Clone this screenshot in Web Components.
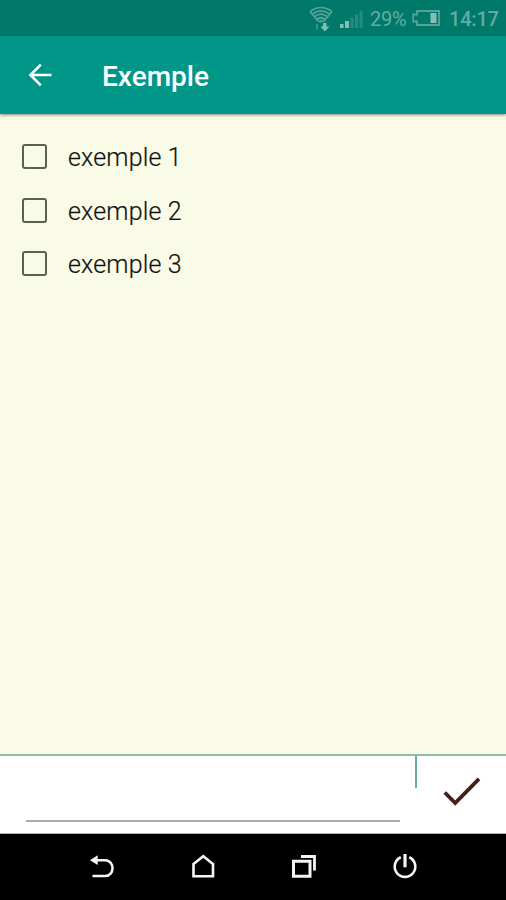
<!DOCTYPE html>
<html lang="fr">
<head>
<meta charset="utf-8">
<title>Exemple</title>
<style>
html,body{margin:0;height:100%;overflow:hidden}
body{font-family:Roboto,"Liberation Sans",sans-serif}
</style>
</head>
<body>
<checklist-app></checklist-app>
<script>
function define(name, html) {
  const template = document.createElement('template');
  template.innerHTML = html;
  customElements.define(name, class extends HTMLElement {
    constructor() {
      super();
      this.attachShadow({ mode: 'open' }).appendChild(template.content.cloneNode(true));
    }
  });
}

define('status-bar', `
<style>
:host{display:flex;align-items:center;justify-content:flex-end;height:36px;box-sizing:border-box;padding:2px 7px 0 0;background:#00796b;color:#64aca3;font-size:20px;line-height:34px}
svg{display:block;flex:none}
.wifi{margin-right:7px}.signal{margin-right:7px}.battery{margin:0 9px 2px 5px}
.pct{width:37px;white-space:nowrap;letter-spacing:-.25px}
.time{width:50px;white-space:nowrap;font-weight:500;letter-spacing:-.2px}
</style>
<svg class="wifi" width="24" height="26" viewBox="0 0 24 26" fill="none" stroke="#58a399" stroke-width="1.7">
<path d="M1 5.500Q12-2.500 23 5.500M3 8.200Q12 1.500 21 8.200M5.500 10.900Q12 5.500 18.500 10.900M8 13.500Q12 10 16 13.500M1 5.500L9.500 15.500M23 5.500L14.500 15.500"/>
<path d="M9 15.500Q12 12.500 15 15.500L12 16.500Z" fill="#58a399" stroke="none"/>
<path d="M14 17h3.500v3.500h3L15.800 25.500 11.500 20.500H14Z" fill="#7fbdb5" stroke="none"/>
<path d="M8 18v5.500" stroke="#31948a" stroke-width="2"/>
</svg>
<svg class="signal" width="23" height="19" viewBox="0 0 23 19">
<path d="M0 14h3.500v4H0ZM5 11h4v7H5Z" fill="#83bfb7"/>
<path d="M10.500 7.500h3v10.500h-3ZM15 4.500h3v13.500h-3ZM19.500 1h3v17h-3Z" fill="#268c80"/>
</svg>
<span class="pct">29%</span>
<svg class="battery" width="28" height="18" viewBox="0 0 28 18">
<path d="M5 2H27V16H5V12.500H1.200V5.500H5Z" fill="none" stroke="#58a399" stroke-width="1.8"/>
<path d="M18.500 4h6v10h-6Z" fill="#83bfb7"/>
</svg>
<span class="time">14:17</span>`);

define('app-toolbar', `
<style>
:host{display:flex;align-items:center;height:78px;box-sizing:border-box;padding:3px 0 0 28px;background:#009688;color:#fff;box-shadow:0 1px 3px rgba(0,0,0,.48);position:relative;font-size:28px;font-weight:500;line-height:40px}
svg{display:block;margin:0 50px 3px 0}
</style>
<svg width="24" height="24" viewBox="0 0 24 24" fill="none" stroke="#fff" stroke-width="2.6"><path d="M23.500 12H2.500M12.800 1.700 2.500 12 12.800 22.300"/></svg>
<slot></slot>`);

define('check-item', `
<style>
:host{display:flex;align-items:center;height:53.500px;font-size:25px;font-weight:300;color:#11120f;line-height:30px;letter-spacing:.17px}
i{box-sizing:border-box;width:25px;height:25px;border:2px solid #5d5e54;border-radius:3px;margin:-2.500px 21.500px 0 0;flex:none}
span{white-space:nowrap;padding-top:1px;-webkit-text-stroke:.2px #11120f}
</style>
<i></i><span><slot></slot></span>`);

define('entry-bar', `
<style>
:host{display:flex;height:80px;box-sizing:border-box;border-top:2px solid #8ebbb0;border-bottom:1px solid #b5b5b5;background:#fff}
.field{flex:none;width:373.500px;margin:0 15.500px 11.500px 26px;border-bottom:2px solid #aaa;box-sizing:border-box}
.rule{width:2px;height:32px;background:#67ad9f}
svg{display:block;margin:21px 0 0 26px}
</style>
<div class="field"></div><div class="rule"></div>
<svg width="38" height="30" viewBox="0 0 38 30" fill="none" stroke="#442018" stroke-width="3.800"><path d="M1.800 15.500 12.200 26 36 1.800"/></svg>`);

define('nav-bar', `
<style>
:host{display:grid;grid-template-columns:repeat(4,101.200px);justify-content:center;align-items:center;justify-items:center;height:66px;background:#000}
svg{display:block;margin-left:1px}
</style>
<svg width="26" height="26" viewBox="0 0 26 26" fill="none" stroke="#f5f5f5" stroke-width="2.600"><path d="M7 6.300H16C26 6.300 26 22 16 22H3.500"/><path d="M1 6.300 8.700 1.300V11.100Z" fill="#f5f5f5" stroke="none"/></svg>
<svg width="26" height="26" viewBox="0 0 26 26" fill="none" stroke="#f5f5f5" stroke-width="2.600"><path d="M3.500 10 13.300 2.200 23 10V22.300H3.500Z"/></svg>
<svg width="26" height="26" viewBox="0 0 26 26" fill="none" stroke="#f5f5f5"><path d="M2.500 7.200H19V22.200H2.500Z" stroke-width="3"/><path d="M10 2.500H23.500V16.500" stroke-width="2.800"/></svg>
<svg width="26" height="26" viewBox="0 0 26 26" fill="none" stroke="#f5f5f5" stroke-width="2.600"><path d="M8.800 3.200A10.300 10.300 0 1 0 17.200 3.200"/><path d="M13 0V13.300" stroke-width="3.200"/></svg>`);

define('checklist-app', `
<style>
:host{display:flex;flex-direction:column;width:506px;height:900px;background:#f9fbe7}
status-bar,app-toolbar,entry-bar,nav-bar{flex:none}
main{flex:1;min-height:0;padding:17px 0 0 21.500px}
</style>
<status-bar></status-bar>
<app-toolbar>Exemple</app-toolbar>
<main><check-item>exemple 1</check-item><check-item>exemple 2</check-item><check-item>exemple 3</check-item></main>
<entry-bar></entry-bar>
<nav-bar></nav-bar>`);
</script>
</body>
</html>
